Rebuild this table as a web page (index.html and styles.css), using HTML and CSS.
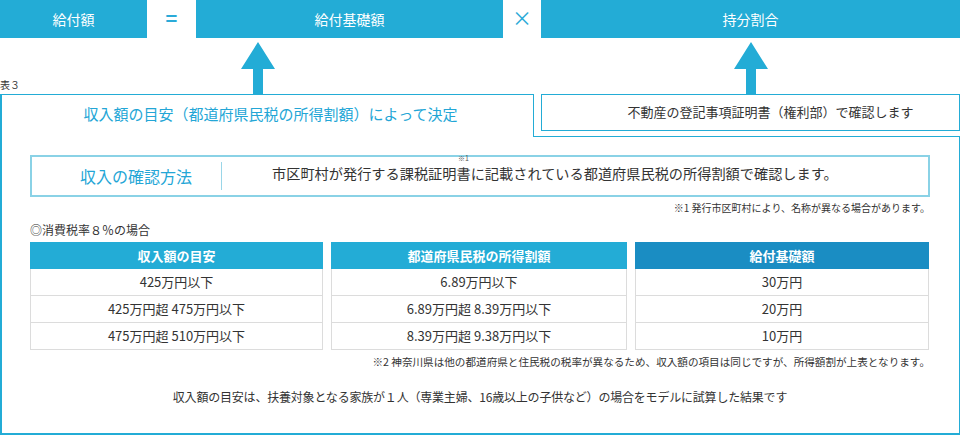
FILE: index.html
```html
<!DOCTYPE html>
<html lang="ja">
<head>
<meta charset="utf-8">
<title>給付額</title>
<link rel="stylesheet" href="styles.css">
</head>
<body>
<div class="page">
  <div class="formula">
    <div class="bar bar-a">給付額</div>
    <div class="op op-eq">=</div>
    <div class="bar bar-b">給付基礎額</div>
    <div class="op op-x">×</div>
    <div class="bar bar-c">持分割合</div>
  </div>

  <div class="arrows">
    <div class="arrow-col left">
      <span class="table-label">表３</span>
      <svg class="arrow arrow-left" width="34" height="52" viewBox="0 0 34 52"><polygon points="17,0 34,27 22,27 22,52 12,52 12,27 0,27" fill="#23acd6"/></svg>
    </div>
    <div class="arrow-col right">
      <svg class="arrow arrow-right" width="34" height="52" viewBox="0 0 34 52"><polygon points="17,0 34,27 22,27 22,52 12,52 12,27 0,27" fill="#23acd6"/></svg>
    </div>
  </div>

  <div class="heads">
    <div class="tab">収入額の目安（都道府県民税の所得割額）によって決定</div>
    <div class="share-box">不動産の登記事項証明書（権利部）で確認します</div>
  </div>

  <div class="panel">
    <div class="method">
      <div class="method-label">収入の確認方法</div>
      <div class="method-text">市区町村が発行する課税証明<span class="anchor"><span class="sup">※1</span>書</span>に記載されている都道府県民税の所得割額で確認します。</div>
    </div>
    <p class="note note-1">※1 発行市区町村により、名称が異なる場合があります。</p>
    <p class="case">◎消費税率８％の場合</p>
    <div class="tables">
      <div class="col">
        <div class="th">収入額の目安</div>
        <div class="td">425万円以下</div>
        <div class="td">425万円超 475万円以下</div>
        <div class="td">475万円超 510万円以下</div>
      </div>
      <div class="col">
        <div class="th">都道府県民税の所得割額</div>
        <div class="td">6.89万円以下</div>
        <div class="td">6.89万円超 8.39万円以下</div>
        <div class="td">8.39万円超 9.38万円以下</div>
      </div>
      <div class="col">
        <div class="th th-dark">給付基礎額</div>
        <div class="td">30万円</div>
        <div class="td">20万円</div>
        <div class="td">10万円</div>
      </div>
    </div>
    <p class="note note-2">※2 神奈川県は他の都道府県と住民税の税率が異なるため、収入額の項目は同じですが、所得額割が上表となります。</p>
    <p class="summary">収入額の目安は、扶養対象となる家族が１人（専業主婦、16歳以上の子供など）の場合をモデルに試算した結果です</p>
  </div>
</div>
</body>
</html>
```

FILE: styles.css
```css
* { box-sizing: border-box; }
html, body { margin: 0; padding: 0; background: #fff; }
body {
  font-family: "Noto Sans CJK JP", "Noto Sans", sans-serif;
  color: #333;
  width: 960px;
  height: 435px;
  overflow: hidden;
}
.page { width: 960px; }

.formula { display: flex; height: 38px; }
.bar {
  background: #23acd6;
  color: #fff;
  font-size: 14px;
  line-height: 38px;
  text-align: center;
}
.bar-a { width: 147px; }
.bar-b { width: 307px; }
.bar-c { flex: 1; }
.op {
  color: #2aaad8;
  text-align: center;
  line-height: 36px;
}
.op-eq { width: 49px; font-size: 20px; font-weight: bold; }
.op-x { width: 38px; font-size: 20px; }

.arrows { display: flex; height: 56px; }
.arrow-col { display: flex; align-items: flex-end; }
.arrow-col.left { width: 541px; }
.arrow-col.right { flex: 1; }
.table-label {
  width: 20px;
  font-size: 10px;
  line-height: 12px;
  margin-bottom: 3px;
  color: #333;
}
.arrow { display: block; }
.arrow-left { margin-left: 221px; }
.arrow-right { margin-left: 193px; }

.heads { display: flex; align-items: flex-start; }
.tab {
  position: relative;
  z-index: 1;
  width: 534px;
  height: 43px;
  margin-bottom: -1px;
  background: #fff;
  border: 1px solid #23acd6;
  border-left-width: 2px;
  border-bottom: none;
  color: #23a6d6;
  font-size: 15px;
  line-height: 38px;
  padding-left: 6px;
  text-align: center;
}
.share-box {
  width: 419px;
  margin-left: 7px;
  height: 37px;
  border: 1px solid #23acd6;
  font-size: 13px;
  line-height: 34px;
  padding-left: 40px;
  text-align: center;
}

.panel {
  height: 299px;
  border: 1px solid #23acd6;
  border-left-width: 2px;
  border-bottom-width: 2px;
  padding: 18px 29px 0 28px;
}

.method {
  display: flex;
  align-items: center;
  height: 42px;
  border: 2px solid #8ad2e6;
}
.method-label {
  width: 190px;
  height: 28px;
  border-right: 1px solid #9ad6e8;
  color: #23a6d6;
  font-size: 16px;
  line-height: 28px;
  padding-left: 48px;
}
.method-text {
  font-size: 14.2px;
  line-height: 20px;
  padding-left: 50px;
  margin-top: -6px;
}
.anchor {
  display: inline-flex;
  flex-direction: column;
  align-items: center;
  vertical-align: bottom;
}
.sup {
  font-size: 7px;
  line-height: 7px;
  height: 0;
  margin-top: -8px;
  margin-bottom: 8px;
  color: #555;
}

.note {
  margin: 0;
  text-align: right;
  font-size: 10px;
  color: #333;
}
.note-1 { margin-top: 5px; line-height: 12px; }
.case {
  margin: 8px 0 0;
  font-size: 12px;
  line-height: 16px;
}

.tables {
  display: grid;
  grid-template-columns: 293px 296px 294px;
  column-gap: 8px;
  margin-top: 4px;
}
.col { display: flex; flex-direction: column; }
.th {
  height: 27px;
  background: #23acd6;
  color: #fff;
  font-size: 13px;
  font-weight: bold;
  line-height: 27px;
  text-align: center;
}
.th-dark { background: #1a8dc3; }
.td {
  height: 27px;
  border: 1px solid #dcdcdc;
  border-top: none;
  font-size: 13px;
  line-height: 26px;
  text-align: center;
}

.note-2 {
  margin-top: 6px;
  line-height: 12px;
  font-size: 10.6px;
}
.summary {
  margin: 21px 0 0;
  text-align: center;
  font-size: 12px;
  line-height: 16px;
  letter-spacing: -0.2px;
}
```
